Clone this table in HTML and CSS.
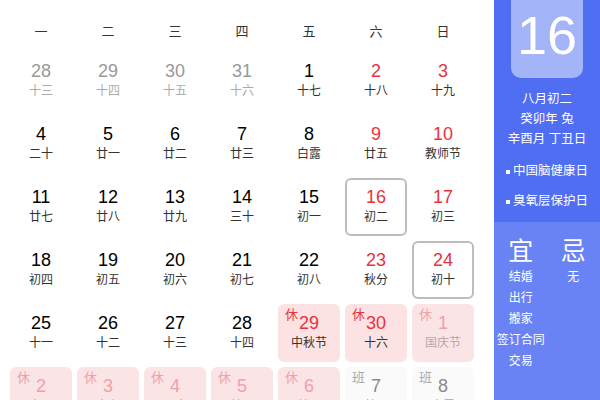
FILE: index.html
```html
<!DOCTYPE html>
<html lang="zh-CN">
<head>
<meta charset="utf-8">
<title>日历</title>
<link rel="stylesheet" href="styles.css">
</head>
<body>
<div class="page">
  <div class="calendar">
    <div class="week">一</div><div class="week">二</div><div class="week">三</div><div class="week">四</div><div class="week">五</div><div class="week">六</div><div class="week">日</div>

    <div class="cell other"><span class="num">28</span><span class="lunar">十三</span></div>
    <div class="cell other"><span class="num">29</span><span class="lunar">十四</span></div>
    <div class="cell other"><span class="num">30</span><span class="lunar">十五</span></div>
    <div class="cell other"><span class="num">31</span><span class="lunar">十六</span></div>
    <div class="cell"><span class="num">1</span><span class="lunar">十七</span></div>
    <div class="cell weekend"><span class="num">2</span><span class="lunar">十八</span></div>
    <div class="cell weekend"><span class="num">3</span><span class="lunar">十九</span></div>

    <div class="cell"><span class="num">4</span><span class="lunar">二十</span></div>
    <div class="cell"><span class="num">5</span><span class="lunar">廿一</span></div>
    <div class="cell"><span class="num">6</span><span class="lunar">廿二</span></div>
    <div class="cell"><span class="num">7</span><span class="lunar">廿三</span></div>
    <div class="cell"><span class="num">8</span><span class="lunar">白露</span></div>
    <div class="cell weekend"><span class="num">9</span><span class="lunar">廿五</span></div>
    <div class="cell weekend"><span class="num">10</span><span class="lunar">教师节</span></div>

    <div class="cell"><span class="num">11</span><span class="lunar">廿七</span></div>
    <div class="cell"><span class="num">12</span><span class="lunar">廿八</span></div>
    <div class="cell"><span class="num">13</span><span class="lunar">廿九</span></div>
    <div class="cell"><span class="num">14</span><span class="lunar">三十</span></div>
    <div class="cell"><span class="num">15</span><span class="lunar">初一</span></div>
    <div class="cell weekend boxed"><span class="num">16</span><span class="lunar">初二</span></div>
    <div class="cell weekend"><span class="num">17</span><span class="lunar">初三</span></div>

    <div class="cell"><span class="num">18</span><span class="lunar">初四</span></div>
    <div class="cell"><span class="num">19</span><span class="lunar">初五</span></div>
    <div class="cell"><span class="num">20</span><span class="lunar">初六</span></div>
    <div class="cell"><span class="num">21</span><span class="lunar">初七</span></div>
    <div class="cell"><span class="num">22</span><span class="lunar">初八</span></div>
    <div class="cell weekend"><span class="num">23</span><span class="lunar">秋分</span></div>
    <div class="cell weekend boxed"><span class="num">24</span><span class="lunar">初十</span></div>

    <div class="cell"><span class="num">25</span><span class="lunar">十一</span></div>
    <div class="cell"><span class="num">26</span><span class="lunar">十二</span></div>
    <div class="cell"><span class="num">27</span><span class="lunar">十三</span></div>
    <div class="cell"><span class="num">28</span><span class="lunar">十四</span></div>
    <div class="cell holiday"><span class="tag">休</span><span class="num">29</span><span class="lunar">中秋节</span></div>
    <div class="cell holiday"><span class="tag">休</span><span class="num">30</span><span class="lunar">十六</span></div>
    <div class="cell holiday next"><span class="tag">休</span><span class="num">1</span><span class="lunar">国庆节</span></div>

    <div class="cell holiday next"><span class="tag">休</span><span class="num">2</span><span class="lunar">十八</span></div>
    <div class="cell holiday next"><span class="tag">休</span><span class="num">3</span><span class="lunar">十九</span></div>
    <div class="cell holiday next"><span class="tag">休</span><span class="num">4</span><span class="lunar">二十</span></div>
    <div class="cell holiday next"><span class="tag">休</span><span class="num">5</span><span class="lunar">廿一</span></div>
    <div class="cell holiday next"><span class="tag">休</span><span class="num">6</span><span class="lunar">廿二</span></div>
    <div class="cell work next"><span class="tag">班</span><span class="num">7</span><span class="lunar">廿三</span></div>
    <div class="cell work next"><span class="tag">班</span><span class="num">8</span><span class="lunar">寒露</span></div>
  </div>

  <aside class="side">
    <div class="side-top">
      <div class="bigdate">16</div>
      <div class="info">八月初二</div>
      <div class="info">癸卯年 兔</div>
      <div class="info">辛酉月 丁丑日</div>
      <ul class="fests">
        <li>中国脑健康日</li>
        <li>臭氧层保护日</li>
      </ul>
    </div>
    <div class="side-bottom">
      <div class="yj yi">
        <div class="yj-head">宜</div>
        <div class="yj-item">结婚</div>
        <div class="yj-item">出行</div>
        <div class="yj-item">搬家</div>
        <div class="yj-item">签订合同</div>
        <div class="yj-item">交易</div>
      </div>
      <div class="yj ji">
        <div class="yj-head">忌</div>
        <div class="yj-item">无</div>
      </div>
    </div>
  </aside>
</div>
</body>
</html>
```

FILE: styles.css
```css
* { box-sizing: border-box; }
html, body {
  margin: 0;
  padding: 0;
  width: 600px;
  height: 400px;
  overflow: hidden;
  background: #fff;
  font-family: "Liberation Sans", "Noto Sans CJK SC", sans-serif;
}
.page {
  display: flex;
  width: 600px;
  height: 400px;
}
.calendar {
  width: 494px;
  flex: none;
  padding: 10px 0 0 10px;
  display: grid;
  grid-template-columns: repeat(7, 62px);
  grid-template-rows: 37px repeat(6, 58px);
  column-gap: 5px;
  row-gap: 5px;
  align-content: start;
}
.week {
  display: flex;
  align-items: center;
  justify-content: center;
  font-size: 13px;
  color: #333;
  padding-top: 3px;
}
.cell {
  position: relative;
  display: flex;
  flex-direction: column;
  align-items: center;
  justify-content: center;
  border-radius: 6px;
  padding-bottom: 3px;
}
.num {
  font-size: 18px;
  line-height: 22px;
  color: #000;
}
.lunar {
  font-size: 12px;
  line-height: 18px;
  color: #333;
}
.other .num { color: #999; }
.other .lunar { color: #aaa; }
.weekend .num { color: #e8323c; }
.boxed { border: 2px solid #bdbdbd; }
.holiday { background: #fde2e3; }
.holiday .num { color: #e8323c; }
.work { background: #f5f5f5; }
.work .num { color: #333; }
.tag {
  position: absolute;
  top: 4px;
  left: 7px;
  font-size: 13px;
  line-height: 14px;
  color: #e8323c;
}
.work .tag { color: #666; }
.next { opacity: 0.45; }
.holiday.next { background: #fbe4e6; opacity: 1; }
.holiday.next .num, .holiday.next .tag { color: #f0a0a8; }
.holiday.next .lunar { color: #b8a8aa; }
.work.next { background: #fafafa; opacity: 1; }
.work.next .num { color: #8a8a8a; }
.work.next .tag, .work.next .lunar { color: #aaa; }

.side {
  width: 106px;
  flex: none;
  display: flex;
  flex-direction: column;
  color: #fff;
  overflow: hidden;
}
.side-top {
  height: 222px;
  background: #4f6ef2;
  display: flex;
  flex-direction: column;
  align-items: center;
}
.bigdate {
  margin-top: -10px;
  width: 72px;
  height: 88px;
  padding-top: 10px;
  border-radius: 10px;
  background: #a3b4f8;
  font-size: 54px;
  line-height: 70px;
  text-align: center;
  color: #fff;
  margin-bottom: 12px;
}
.info {
  font-size: 12.5px;
  line-height: 19px;
  margin-bottom: 1px;
}
.fests {
  list-style: none;
  margin: 12px 0 0;
  padding: 0;
}
.fests li {
  font-size: 12.5px;
  line-height: 19px;
  margin-bottom: 11px;
  display: flex;
  align-items: center;
}
.fests li::before {
  content: "";
  width: 4px;
  height: 4px;
  background: #fff;
  margin-right: 3px;
}
.side-bottom {
  flex: 1;
  background: #6983f4;
  display: flex;
  padding-top: 15px;
}
.yj {
  display: flex;
  flex-direction: column;
  align-items: center;
}
.yi { width: 58px; }
.ji { width: 58px; margin-left: -1px; }
.yj-head {
  font-size: 25px;
  line-height: 28px;
  margin-bottom: 2px;
}
.yj-item {
  font-size: 12px;
  line-height: 21px;
}
```
